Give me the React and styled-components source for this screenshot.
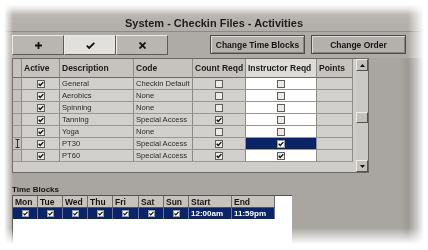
import React from "react";
import styled, { createGlobalStyle } from "styled-components";

const GlobalStyle = createGlobalStyle`
  html, body { margin: 0; padding: 0; background: #fff; }
  body { font-family: "Liberation Sans", Arial, sans-serif; }
  #root { width: 428px; height: 250px; overflow: hidden; }
`;

const fadeMask =
  "linear-gradient(to right, transparent 0, #000 9px, #000 calc(100% - 16px), transparent 100%), linear-gradient(to bottom, transparent 0, #000 10px, #000 calc(100% - 16px), transparent 100%)";

const Window = styled.div`
  box-sizing: border-box;
  margin: 4px 4px 0 4px;
  height: 240px;
  display: flex;
  flex-direction: column;
  background: linear-gradient(to right, #a9a6a1 0, #a9a6a1 calc(100% - 24px), #8c8985 calc(100% - 6px));
  -webkit-mask-image: ${fadeMask};
  -webkit-mask-composite: source-in;
  mask-image: ${fadeMask};
  mask-composite: intersect;
`;

const TitleBar = styled.div`
  box-sizing: border-box;
  height: 28px;
  display: flex;
  align-items: flex-end;
  justify-content: center;
  padding-bottom: 1px;
  border-bottom: 1px solid #8d8a86;
  background: linear-gradient(to bottom, #d8d6d2 0, #b6b3ae 14px, #b2afaa 100%);
  font-size: 11px;
  line-height: 13px;
  font-weight: bold;
  color: #1d1d1d;
`;

const Toolbar = styled.div`
  box-sizing: border-box;
  height: 26px;
  padding: 3px 18px 0 8px;
  display: flex;
  align-items: flex-start;
  background: #aeaba6;
`;

const ToolGroup = styled.div`
  display: flex;
`;

const ToolButton = styled.button`
  box-sizing: border-box;
  width: 52px;
  height: 20px;
  margin: 0;
  padding: 0;
  display: flex;
  align-items: center;
  justify-content: center;
  background: ${(p) => (p.$active ? "#e2e0dc" : "#b9b6b1")};
  border: 1px solid;
  border-color: #eceae6 #5e5b57 #5e5b57 #eceae6;
`;

const ActionGroup = styled.div`
  margin-left: auto;
  display: flex;
  gap: 6px;
`;

const ActionButton = styled.button`
  box-sizing: border-box;
  width: 95px;
  height: 19px;
  margin: 0;
  padding: 0;
  background: #b4b1ac;
  border: 1px solid #4d4a47;
  box-shadow: inset 1px 1px 0 #dedbd6, inset -1px -1px 0 #86837f;
  font-family: "Liberation Sans", Arial, sans-serif;
  font-size: 8.5px;
  font-weight: bold;
  color: #151515;
`;

const Body = styled.div`
  flex: 1;
  display: flex;
  flex-direction: column;
  padding-left: 8px;
  min-height: 0;
`;

const GridFrame = styled.div`
  box-sizing: border-box;
  width: 357px;
  height: 115px;
  display: flex;
  border: 1px solid #6c6965;
  background: #cfcdca;
`;

const Table = styled.div`
  width: 340px;
  display: grid;
  grid-template-columns: 9px 38px 74px 59px 53px 71px 36px;
  grid-template-rows: 19px repeat(7, 12px) 1fr;
`;

const cellBg = {
  header: "#c6c3be",
  headerLight: "#dedcd8",
  indicator: "#c6c3be",
  cell: "#d2d0cd",
  white: "#ffffff",
  selected: "#0a246a",
};

const isHead = (k) => k === "header" || k === "headerLight";

const Cell = styled.div`
  box-sizing: border-box;
  display: flex;
  align-items: center;
  justify-content: ${(p) => (p.$center ? "center" : "flex-start")};
  padding-left: ${(p) => (p.$center ? 0 : 2)}px;
  overflow: hidden;
  white-space: nowrap;
  background: ${(p) => cellBg[p.$kind]};
  border-right: 1px solid #8f8c88;
  border-bottom: 1px solid ${(p) => (isHead(p.$kind) ? "#6f6c68" : "#9a9793")};
  font-size: ${(p) => (isHead(p.$kind) ? "8.5px" : "7.6px")};
  font-weight: ${(p) => (isHead(p.$kind) ? "bold" : "normal")};
  color: ${(p) => (isHead(p.$kind) ? "#1a1a1a" : "#2a2a2a")};
`;

const Filler = styled.div`
  grid-column: 1 / -1;
  background: #cfcdca;
`;

const Scrollbar = styled.div`
  width: 12px;
  margin-left: 3px;
  display: flex;
  flex-direction: column;
  background: #cbc9c5;
`;

const ScrollButton = styled.div`
  box-sizing: border-box;
  height: 12px;
  display: flex;
  align-items: center;
  justify-content: center;
  background: #c4c1bc;
  border: 1px solid;
  border-color: #eeece8 #55524e #55524e #eeece8;
`;

const Track = styled.div`
  flex: 1;
  padding-top: ${(p) => p.$offset}px;
`;

const Thumb = styled.div`
  box-sizing: border-box;
  height: 11px;
  background: #c4c1bc;
  border: 1px solid;
  border-color: #eeece8 #55524e #55524e #eeece8;
`;

const SectionLabel = styled.div`
  margin-top: 12px;
  height: 10px;
  font-size: 8px;
  line-height: 10px;
  font-weight: bold;
  color: #151515;
`;

const BlocksFrame = styled.div`
  box-sizing: border-box;
  width: 280px;
  flex: 1;
  display: grid;
  grid-template-columns: 25px 25px 25px 25px 26px 25px 25px 43px 43px;
  grid-template-rows: 12px 11px;
  align-content: start;
  background: #fff;
  border-top: 1px solid #55524f;
  border-left: 1px solid #55524f;
`;

const BlockHead = styled.div`
  box-sizing: border-box;
  display: flex;
  align-items: center;
  padding-left: 2px;
  background: #c6c3be;
  border-right: 1px solid #6f6c68;
  border-bottom: 1px solid #55524f;
  font-size: 8.5px;
  font-weight: bold;
  color: #151515;
`;

const BlockCell = styled.div`
  box-sizing: border-box;
  display: flex;
  align-items: center;
  justify-content: ${(p) => (p.$center ? "center" : "flex-start")};
  padding-left: ${(p) => (p.$center ? 0 : 2)}px;
  background: #0a246a;
  border-right: 1px solid #6d7391;
  font-size: 8px;
  font-weight: bold;
  color: #fff;
  white-space: nowrap;
`;

const BoxSvg = styled.svg`
  display: block;
  flex: none;
`;

function CheckBox({ checked, size = 8, light }) {
  return (
    <BoxSvg width={size} height={size} viewBox="0 0 8 8">
      <rect x="0.5" y="0.5" width="7" height="7" fill={light ? "#f8f8f8" : "#ecebea"} stroke={light ? "#9a9a9a" : "#5f5d5a"} />
      {checked && (
        <path d="M1.7 3.8 L3.2 5.5 L6.3 2.1" fill="none" stroke="#111" strokeWidth="1.4" />
      )}
    </BoxSvg>
  );
}

function IBeam() {
  return (
    <BoxSvg width="5" height="9" viewBox="0 0 5 9">
      <path d="M0.5 0.5 H4.5 M2.5 0.5 V8.5 M0.5 8.5 H4.5" fill="none" stroke="#333" strokeWidth="1" />
    </BoxSvg>
  );
}

const rows = [
  { desc: "General", code: "Checkin Default", active: true, count: false, instr: false },
  { desc: "Aerobics", code: "None", active: true, count: false, instr: false },
  { desc: "Spinning", code: "None", active: true, count: false, instr: false },
  { desc: "Tanning", code: "Special Access", active: true, count: true, instr: false },
  { desc: "Yoga", code: "None", active: true, count: false, instr: false },
  { desc: "PT30", code: "Special Access", active: true, count: true, instr: true, selected: true },
  { desc: "PT60", code: "Special Access", active: true, count: true, instr: true },
];

const headers = ["", "Active", "Description", "Code", "Count Reqd", "Instructor Reqd", "Points"];
const days = ["Mon", "Tue", "Wed", "Thu", "Fri", "Sat", "Sun"];

export default function App() {
  return (
    <>
      <GlobalStyle />
      <Window>
        <TitleBar>System - Checkin Files - Activities</TitleBar>
        <Toolbar>
          <ToolGroup>
            <ToolButton aria-label="Add">
              <svg width="7" height="7" viewBox="0 0 7 7">
                <path d="M3.5 0 V7 M0 3.5 H7" stroke="#111" strokeWidth="1.8" />
              </svg>
            </ToolButton>
            <ToolButton $active aria-label="Save">
              <svg width="9" height="7" viewBox="0 0 9 7">
                <path d="M0.8 3.6 L3.2 6 L8.3 0.8" fill="none" stroke="#111" strokeWidth="1.8" />
              </svg>
            </ToolButton>
            <ToolButton aria-label="Cancel">
              <svg width="7" height="7" viewBox="0 0 7 7">
                <path d="M0.5 0.5 L6.5 6.5 M6.5 0.5 L0.5 6.5" stroke="#111" strokeWidth="1.8" />
              </svg>
            </ToolButton>
          </ToolGroup>
          <ActionGroup>
            <ActionButton>Change Time Blocks</ActionButton>
            <ActionButton>Change Order</ActionButton>
          </ActionGroup>
        </Toolbar>
        <Body>
          <GridFrame>
            <Table>
              {headers.map((h, i) => (
                <Cell key={"h" + i} $kind={i === 5 ? "headerLight" : "header"}>
                  {h}
                </Cell>
              ))}
              {rows.map((r, i) => (
                <React.Fragment key={i}>
                  <Cell $kind="indicator" $center>
                    {r.selected && <IBeam />}
                  </Cell>
                  <Cell $kind="cell" $center>
                    <CheckBox checked={r.active} />
                  </Cell>
                  <Cell $kind="cell">{r.desc}</Cell>
                  <Cell $kind="cell">{r.code}</Cell>
                  <Cell $kind="cell" $center>
                    <CheckBox checked={r.count} />
                  </Cell>
                  <Cell $kind={r.selected ? "selected" : "white"} $center>
                    <CheckBox checked={r.instr} light={r.selected} />
                  </Cell>
                  <Cell $kind="cell" />
                </React.Fragment>
              ))}
              <Filler />
            </Table>
            <Scrollbar>
              <ScrollButton>
                <svg width="5" height="3" viewBox="0 0 5 3">
                  <path d="M2.5 0 L5 3 H0 Z" fill="#111" />
                </svg>
              </ScrollButton>
              <Track $offset={41}>
                <Thumb />
              </Track>
              <ScrollButton>
                <svg width="5" height="3" viewBox="0 0 5 3">
                  <path d="M0 0 H5 L2.5 3 Z" fill="#111" />
                </svg>
              </ScrollButton>
            </Scrollbar>
          </GridFrame>
          <SectionLabel>Time Blocks</SectionLabel>
          <BlocksFrame>
            {days.map((d) => (
              <BlockHead key={d}>{d}</BlockHead>
            ))}
            <BlockHead>Start</BlockHead>
            <BlockHead>End</BlockHead>
            {days.map((d) => (
              <BlockCell key={"c" + d} $center>
                <CheckBox checked size={7} light />
              </BlockCell>
            ))}
            <BlockCell>12:00am</BlockCell>
            <BlockCell>11:59pm</BlockCell>
          </BlocksFrame>
        </Body>
      </Window>
    </>
  );
}
